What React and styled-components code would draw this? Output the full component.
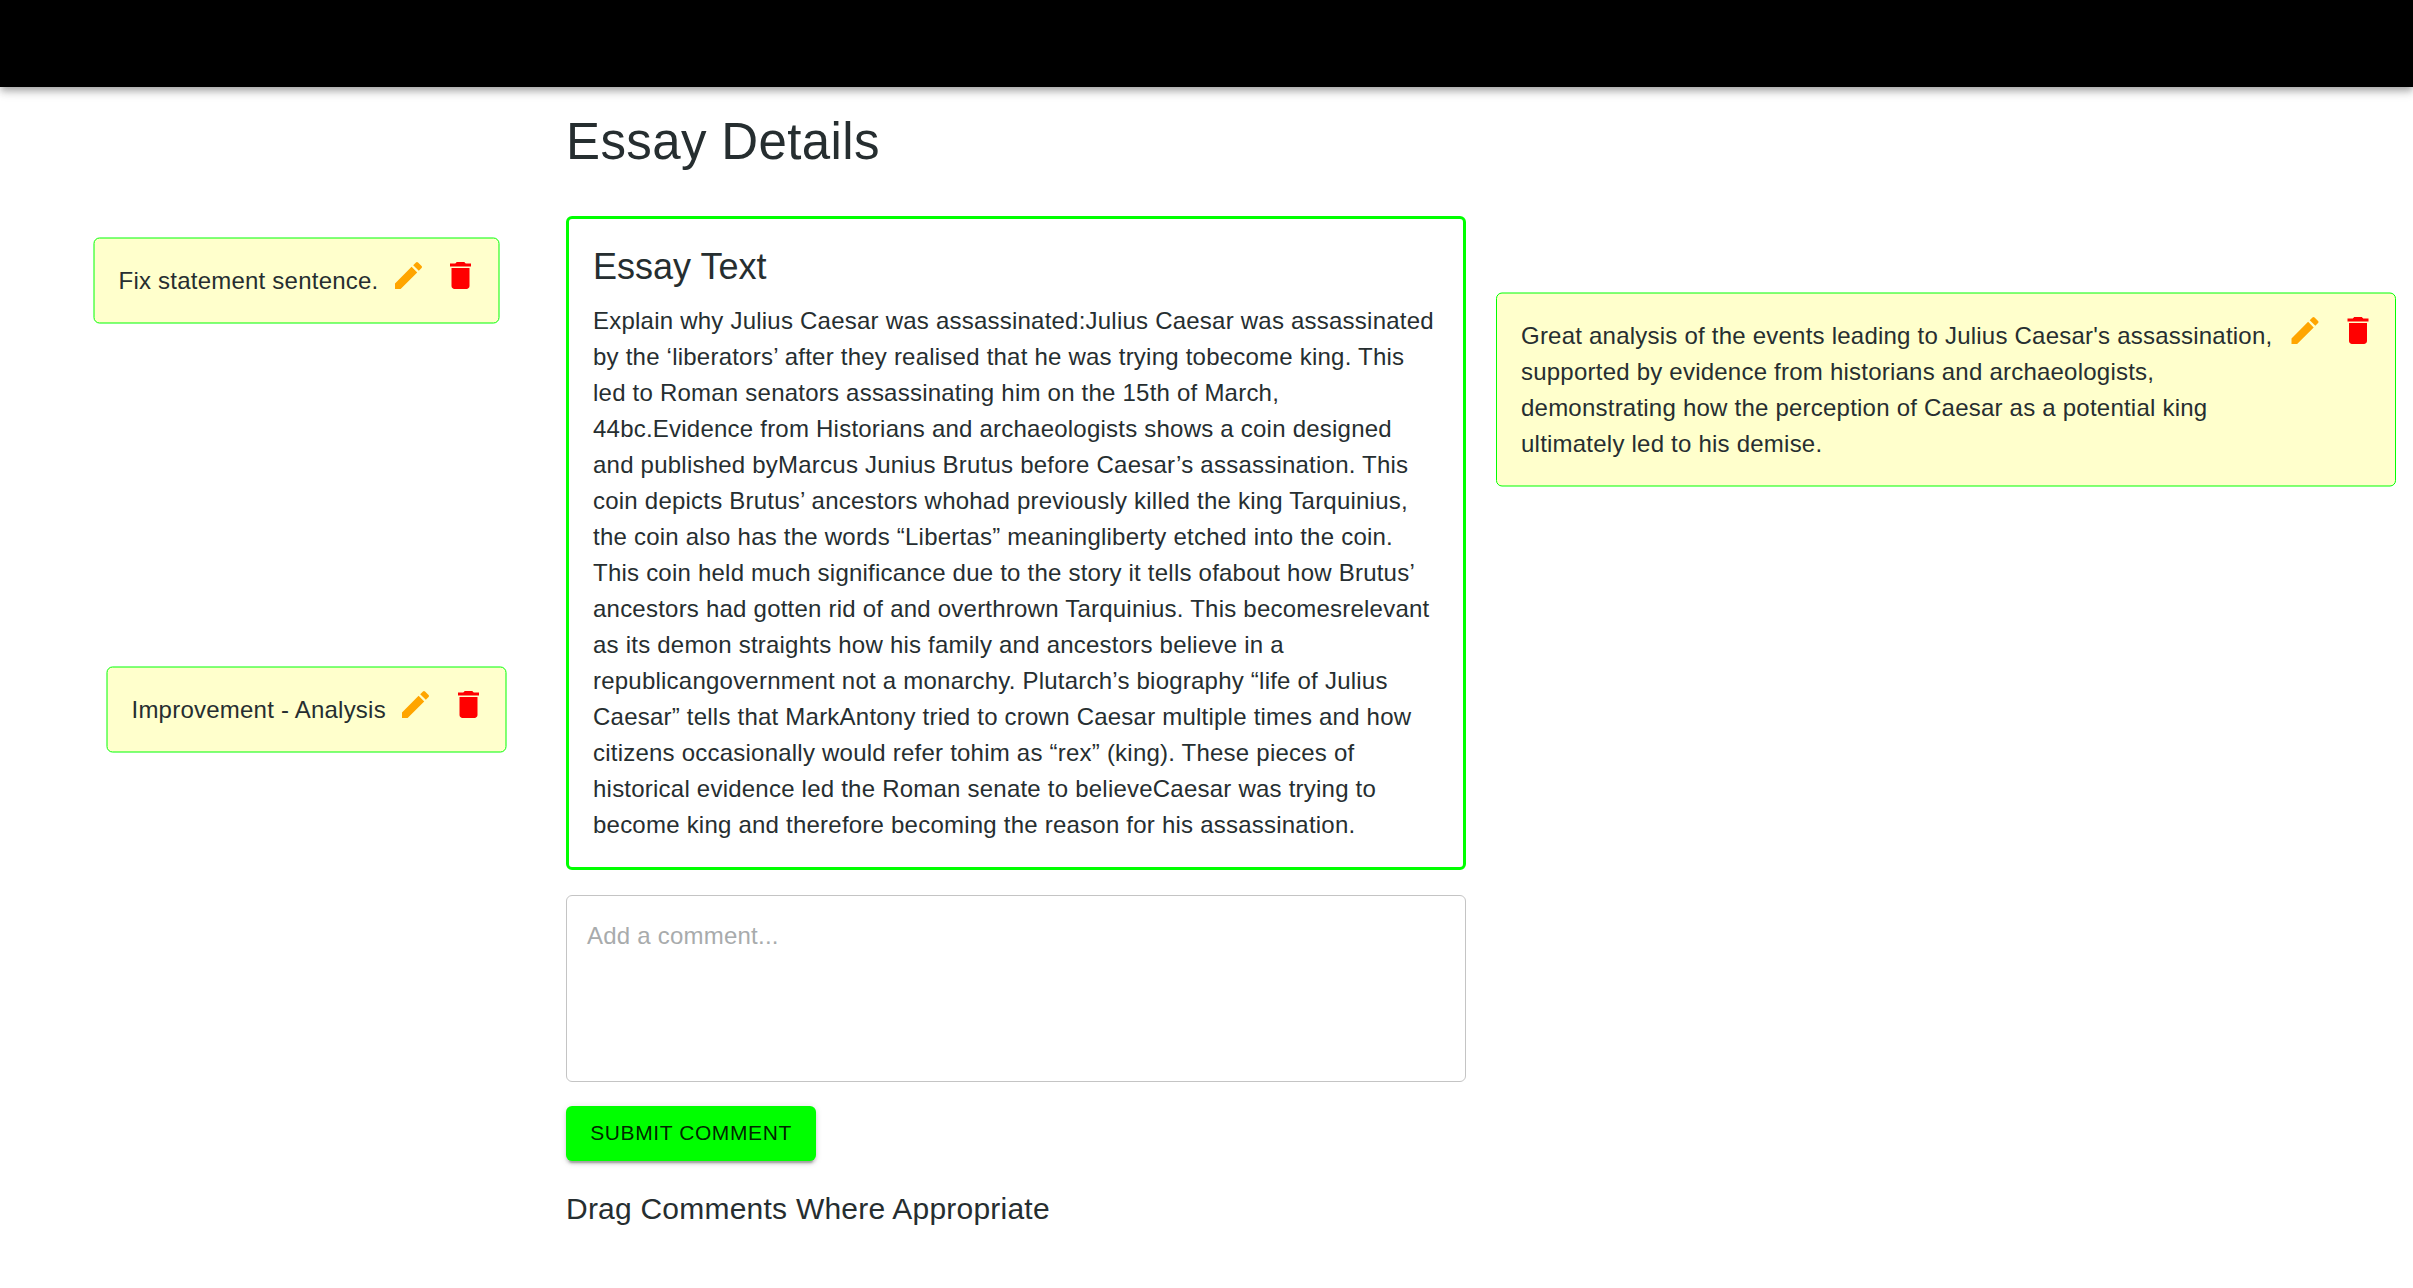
import React from 'react';
import styled, { createGlobalStyle } from 'styled-components';

const GlobalStyle = createGlobalStyle`
  *, *::before, *::after { box-sizing: border-box; }
  body {
    margin: 0;
    background: #fff;
    color: #262e30;
    font-family: "Liberation Sans", Arial, Helvetica, sans-serif;
    font-size: 24px;
    line-height: 36px;
    letter-spacing: 0.225px;
  }
`;

const Page = styled.div`
  position: relative;
  height: 1288px;
  overflow: hidden;
`;

const AppBar = styled.header`
  height: 87px;
  background: #000;
  box-shadow:
    0 3px 6px -1.5px rgba(0, 0, 0, 0.2),
    0 6px 7.5px 0 rgba(0, 0, 0, 0.14),
    0 1.5px 15px 0 rgba(0, 0, 0, 0.12);
`;

const Main = styled.main`
  display: flex;
  flex-direction: column;
  align-items: flex-start;
  width: 900px;
  margin-left: 566px;
  padding-top: 23px;
`;

const Title = styled.h1`
  margin: 0 0 43px;
  font-size: 51px;
  font-weight: 400;
  line-height: 63px;
  letter-spacing: 0.375px;
`;

const EssayCard = styled.section`
  width: 100%;
  height: 654px;
  padding: 24px;
  border: 3px solid #00ff00;
  border-radius: 6px;
`;

const EssayHeading = styled.h2`
  margin: 0 0 12px;
  font-size: 36px;
  font-weight: 400;
  line-height: 48px;
  letter-spacing: 0;
`;

const EssayBody = styled.p`
  margin: 0;
`;

const CommentField = styled.textarea`
  display: block;
  width: 100%;
  height: 187px;
  margin: 25px 0 24px;
  padding: 22px 20px;
  border: 1px solid #c4c4c4;
  border-radius: 6px;
  background: #fff;
  color: inherit;
  font: inherit;
  letter-spacing: inherit;
  resize: none;
  outline: none;

  &::placeholder {
    color: #a8abac;
    opacity: 1;
  }
`;

const SubmitButton = styled.button`
  width: 250px;
  height: 55px;
  padding: 0 0 2px;
  border: 0;
  border-radius: 6px;
  background: #00ff00;
  color: rgba(0, 0, 0, 0.87);
  font-family: inherit;
  font-size: 21px;
  line-height: 37px;
  letter-spacing: 0.6px;
  text-transform: uppercase;
  box-shadow:
    0 4.5px 1.5px -3px rgba(0, 0, 0, 0.2),
    0 3px 3px 0 rgba(0, 0, 0, 0.14),
    0 1.5px 7.5px 0 rgba(0, 0, 0, 0.12);
`;

const DragHeading = styled.h3`
  margin: 24px 0 0;
  font-size: 30px;
  font-weight: 400;
  line-height: 48px;
  letter-spacing: 0.225px;
`;

const Note = styled.article`
  position: absolute;
  top: 0;
  left: 0;
  display: flex;
  align-items: flex-start;
  justify-content: space-between;
  width: ${(p) => p.$width}px;
  padding: 24px;
  border: 1px solid #00ff00;
  border-radius: 6px;
  background: #ffffcc;
  transform: translate(${(p) => p.$x}px, ${(p) => p.$y}px);
`;

const NoteText = styled.p`
  flex: 1;
  min-width: 0;
  margin: 0;
`;

const NoteActions = styled.div`
  display: flex;
  gap: ${(p) => p.$gap}px;
  margin: -5px ${(p) => p.$edge}px -5px 8px;
`;

const IconButton = styled.button`
  display: flex;
  padding: 0;
  border: 0;
  background: none;
  color: ${(p) => p.$color};
`;

const Icon = styled.svg`
  width: 36px;
  height: 36px;
  fill: currentColor;
`;

const EDIT = 'M3 17.25V21h3.75L17.81 9.94l-3.75-3.75L3 17.25zM20.71 7.04c.39-.39.39-1.02 0-1.41l-2.34-2.34a.9959.9959 0 0 0-1.41 0l-1.83 1.83 3.75 3.75 1.83-1.83z';
const DELETE = 'M6 19c0 1.1.9 2 2 2h8c1.1 0 2-.9 2-2V7H6v12zM19 4h-3.5l-1-1h-5l-1 1H5v2h14V4z';

const notes = [
  { id: 1, x: 93.5, y: 237.5, width: 406, edge: -4, gap: 16, text: 'Fix statement sentence.' },
  { id: 2, x: 106.5, y: 666.5, width: 400, edge: -5, gap: 17, text: 'Improvement - Analysis' },
  {
    id: 3, x: 1496, y: 292.5, width: 900, edge: -5, gap: 17,
    text: "Great analysis of the events leading to Julius Caesar's assassination, supported by evidence from historians and archaeologists, demonstrating how the perception of Caesar as a potential king ultimately led to his demise.",
  },
];

const essay =
  'Explain why Julius Caesar was assassinated:Julius Caesar was assassinated by the ‘liberators’ after they realised that he was trying tobecome king. This led to Roman senators assassinating him on the 15th of March, 44bc.Evidence from Historians and archaeologists shows a coin designed and published byMarcus Junius Brutus before Caesar’s assassination. This coin depicts Brutus’ ancestors whohad previously killed the king Tarquinius, the coin also has the words “Libertas” meaningliberty etched into the coin. This coin held much significance due to the story it tells ofabout how Brutus’ ancestors had gotten rid of and overthrown Tarquinius. This becomesrelevant as its demon straights how his family and ancestors believe in a republicangovernment not a monarchy. Plutarch’s biography “life of Julius Caesar” tells that MarkAntony tried to crown Caesar multiple times and how citizens occasionally would refer tohim as “rex” (king). These pieces of historical evidence led the Roman senate to believeCaesar was trying to become king and therefore becoming the reason for his assassination.';

export default function App() {
  return (
    <Page>
      <GlobalStyle />
      <AppBar />
      <Main>
        <Title>Essay Details</Title>
        <EssayCard>
          <EssayHeading>Essay Text</EssayHeading>
          <EssayBody>{essay}</EssayBody>
        </EssayCard>
        <CommentField placeholder="Add a comment..." />
        <SubmitButton type="button">Submit Comment</SubmitButton>
        <DragHeading>Drag Comments Where Appropriate</DragHeading>
      </Main>
      {notes.map((n) => (
        <Note key={n.id} $x={n.x} $y={n.y} $width={n.width}>
          <NoteText>{n.text}</NoteText>
          <NoteActions $edge={n.edge} $gap={n.gap}>
            <IconButton type="button" $color="#ffa500" aria-label="Edit">
              <Icon viewBox="0 0 24 24"><path d={EDIT} /></Icon>
            </IconButton>
            <IconButton type="button" $color="#ff0000" aria-label="Delete">
              <Icon viewBox="0 0 24 24"><path d={DELETE} /></Icon>
            </IconButton>
          </NoteActions>
        </Note>
      ))}
    </Page>
  );
}
